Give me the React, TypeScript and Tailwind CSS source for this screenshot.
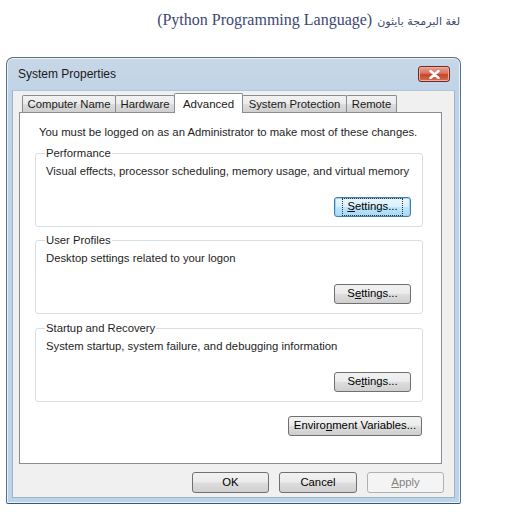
import React from "react";

const ui = { fontFamily: '"Liberation Sans", Arial, sans-serif' };

function Btn({
  children,
  className = "",
  focused = false,
  disabled = false,
}: {
  children: React.ReactNode;
  className?: string;
  focused?: boolean;
  disabled?: boolean;
}) {
  let look =
    "border-[#707070] bg-[linear-gradient(#f2f2f2_0%,#ebebeb_48%,#dddddd_52%,#cfcfcf_100%)] text-black";
  if (focused)
    look =
      "border-[#3c7fb1] bg-[linear-gradient(#eaf6fd_0%,#d9f0fc_48%,#bee6fd_52%,#a7d9f5_100%)] text-black shadow-[inset_0_0_0_1px_#9fd4f0]";
  if (disabled) look = "border-[#adb2b5] bg-[#f4f4f4] text-[#838383]";
  return (
    <button
      className={`flex items-center justify-center whitespace-nowrap rounded-[3px] border text-[11.3px] leading-none ${look} ${className}`}
    >
      {focused ? (
        <span className="border border-dotted border-[#333] px-[4px] py-[2px]">{children}</span>
      ) : (
        children
      )}
    </button>
  );
}

function Group({
  title,
  text,
  button,
  focused,
  className = "",
}: {
  title: string;
  text: string;
  button: React.ReactNode;
  focused?: boolean;
  className?: string;
}) {
  return (
    <fieldset
      className={`rounded-[3px] border border-[#d5dfe5] pl-[10px] pr-[11px] pb-[9px] ${className}`}
    >
      <legend className="-ml-[1px] px-[1px] text-[11.3px] leading-[16px] text-[#1e1e1e]">{title}</legend>
      <div className="mt-[2px] whitespace-nowrap text-[11.3px] leading-[16px] text-[#1e1e1e]">{text}</div>
      <div className="mt-[18px] flex justify-end">
        <Btn focused={focused} className="h-[20px] w-[77px]">
          {button}
        </Btn>
      </div>
    </fieldset>
  );
}

export default function App() {
  const tabs = [
    { name: "Computer Name", w: "w-[94px]" },
    { name: "Hardware", w: "w-[60px]" },
    { name: "Advanced", w: "w-[69px]", active: true },
    { name: "System Protection", w: "w-[105px]" },
    { name: "Remote", w: "w-[51px]" },
  ];

  return (
    <div className="h-[512px] w-[512px] overflow-hidden bg-white" style={ui}>
      {/* heading */}
      <div className="flex h-[57px] justify-end pr-[52px] pt-[11px]">
        <div
          className="flex items-baseline gap-[5px] leading-[18px] text-[#3b4872]"
          style={{ fontFamily: '"Liberation Serif", "DejaVu Sans", serif' }}
        >
          <span className="text-[16px]">(Python Programming Language)</span>
          <span className="text-[11px]" style={{ fontFamily: '"DejaVu Sans", sans-serif' }}>
            لغة البرمجة بايثون
          </span>
        </div>
      </div>

      {/* window */}
      <div className="ml-[6px] flex h-[447px] w-[455px] flex-col rounded-t-[7px] rounded-b-[2px] border border-[#5d6f82] border-b-[#2f5b70] bg-[linear-gradient(#c9d7e6_0%,#bfd3e8_8%,#bcd3ea_100%)] shadow-[inset_0_0_0_1px_#e8f0f8]">
        {/* title bar */}
        <div className="flex h-[32px] shrink-0 items-center justify-between pl-[11px] pr-[10px]">
          <span className="text-[12px] text-[#1a1a1a]">System Properties</span>
          <div className="flex h-[16px] w-[32px] items-center justify-center rounded-[3px] border border-[#6e2a22] bg-[linear-gradient(#e8a392_0%,#d8735e_45%,#c4452c_55%,#d2704f_100%)] shadow-[inset_0_0_0_1px_#eeb0a0]">
            <svg width="11" height="9" viewBox="0 0 11 9">
              <path
                d="M1.5 1 L9.5 8 M9.5 1 L1.5 8"
                stroke="#fff"
                strokeWidth="2.4"
                strokeLinecap="round"
              />
            </svg>
          </div>
        </div>

        {/* client area */}
        <div className="mx-[5px] mb-[5px] flex flex-1 flex-col border border-[#9fb3c7] border-t-[#b4c4d4] bg-[#f0f0f0] px-[6px] pt-[2px]">
          {/* tabs */}
          <div className="ml-[3px] flex h-[19px] items-end">
            {tabs.map((t, i) =>
              t.active ? (
                <div
                  key={t.name}
                  className={`relative z-10 -mb-px flex h-[20px] ${t.w} ${i > 0 ? "-ml-px" : ""} items-start justify-center whitespace-nowrap rounded-t-[2px] border border-b-0 border-[#898c95] bg-white pt-[2px] text-[11.5px] text-[#1a1a1a]`}
                >
                  {t.name}
                </div>
              ) : (
                <div
                  key={t.name}
                  className={`flex h-[17px] ${t.w} ${i > 0 ? "-ml-px" : ""} items-center justify-center whitespace-nowrap rounded-t-[2px] border border-b-0 border-[#898c95] bg-[linear-gradient(#f2f2f2_0%,#ebebeb_50%,#dddddd_51%,#cfcfcf_100%)] text-[11.3px] text-[#1a1a1a]`}
                >
                  {t.name}
                </div>
              )
            )}
          </div>

          {/* panel */}
          <div className="flex h-[352px] w-[423px] flex-col border border-[#898c95] bg-white pl-[15px] pr-[18px] pt-[11px]">
            <div className="whitespace-nowrap pl-[4px] text-[11.3px] leading-[16px] text-[#1e1e1e]">
              You must be logged on as an Administrator to make most of these changes.
            </div>

            <Group
              className="mt-[5px]"
              title="Performance"
              text="Visual effects, processor scheduling, memory usage, and virtual memory"
              focused
              button={
                <>
                  <u>S</u>ettings...
                </>
              }
            />
            <Group
              className="mt-[5px]"
              title="User Profiles"
              text="Desktop settings related to your logon"
              button={
                <>
                  S<u>e</u>ttings...
                </>
              }
            />
            <Group
              className="mt-[6px]"
              title="Startup and Recovery"
              text="System startup, system failure, and debugging information"
              button={
                <>
                  Se<u>t</u>tings...
                </>
              }
            />

            <div className="mt-[14px] flex justify-end pr-[1px]">
              <Btn className="h-[20px] w-[134px]">
                Enviro<u>n</u>ment Variables...
              </Btn>
            </div>
          </div>

          {/* dialog buttons */}
          <div className="mt-[8px] flex justify-end gap-[10px] pr-[4px]">
            <Btn className="h-[21px] w-[77px]">OK</Btn>
            <Btn className="h-[21px] w-[78px]">Cancel</Btn>
            <Btn disabled className="h-[21px] w-[77px]">
              <u>A</u>pply
            </Btn>
          </div>
        </div>
      </div>
    </div>
  );
}
